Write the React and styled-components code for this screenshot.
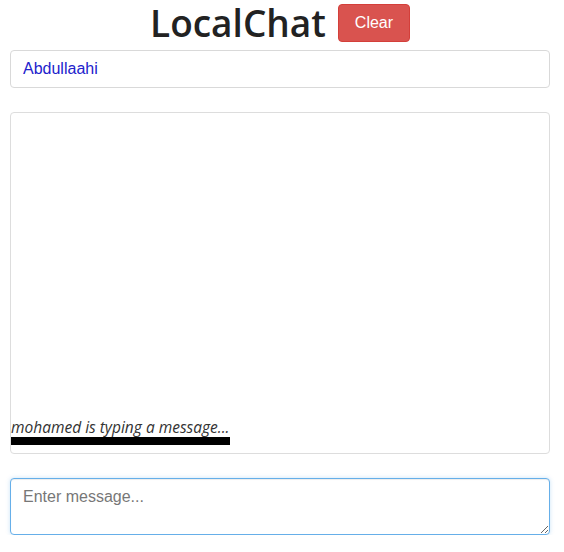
import React from 'react'
import styled, { createGlobalStyle } from 'styled-components'

const GlobalStyle = createGlobalStyle`
  html, body {
    margin: 0;
    padding: 0;
    background: #fff;
  }
  body {
    font-family: "Liberation Sans", Arial, sans-serif;
    font-size: 16px;
    color: #333;
  }
`

const Page = styled.div`
  width: 564px;
  padding: 0 14px 0 10px;
  box-sizing: border-box;
`

const Header = styled.div`
  display: flex;
  align-items: center;
  justify-content: center;
  gap: 12px;
  height: 46px;
  margin-bottom: 4px;
`

const Title = styled.h1`
  margin: -4px 0;
  font-family: "Open Sans", "Noto Sans", sans-serif;
  font-weight: 600;
  font-size: 37px;
  line-height: 54px;
  color: #222;
`

const ClearButton = styled.button`
  height: 38px;
  width: 72px;
  border: 1px solid #d43f3a;
  border-radius: 4px;
  background: #d9534f;
  color: #fff;
  font-family: "Liberation Sans", Arial, sans-serif;
  font-size: 16px;
  padding: 0;
`

const NameInput = styled.input`
  display: block;
  width: 100%;
  height: 38px;
  box-sizing: border-box;
  border: 1px solid #d9d9d9;
  border-radius: 4px;
  padding: 0 12px;
  font-family: "Liberation Sans", Arial, sans-serif;
  font-size: 16px;
  color: #2222cc;
  outline: none;
`

const ChatBox = styled.div`
  margin-top: 24px;
  height: 342px;
  box-sizing: border-box;
  border: 1px solid #ddd;
  border-radius: 4px;
  display: flex;
  flex-direction: column;
  justify-content: flex-end;
  padding-bottom: 8px;
`

const Typing = styled.div`
  font-family: "Open Sans", "Noto Sans", sans-serif;
  font-style: italic;
  font-weight: 400;
  font-size: 15.5px;
  line-height: 20px;
  color: #333;
`

const Bar = styled.div`
  height: 8px;
  background: #000;
`

const MessageArea = styled.textarea`
  display: block;
  margin-top: 24px;
  width: 100%;
  height: 57px;
  box-sizing: border-box;
  border: 1px solid #66afe9;
  border-radius: 4px;
  padding: 8px 12px 6px;
  font-family: "Liberation Sans", Arial, sans-serif;
  font-size: 16px;
  line-height: 20px;
  color: #333;
  caret-color: #333;
  outline: none;
  box-shadow: inset 0 1px 1px rgba(0, 0, 0, 0.075), 0 0 4px rgba(102, 175, 233, 0.35);
  resize: vertical;

  &::placeholder {
    color: #777;
  }
`

export default function App() {
  return (
    <>
      <GlobalStyle />
      <Page>
        <Header>
          <Title>LocalChat</Title>
          <ClearButton>Clear</ClearButton>
        </Header>
        <NameInput defaultValue="Abdullaahi" />
        <ChatBox>
          <Typing>mohamed is typing a message...</Typing>
          <Bar style={{ width: 219 }} />
        </ChatBox>
        <MessageArea placeholder="Enter message..." autoFocus />
      </Page>
    </>
  )
}
